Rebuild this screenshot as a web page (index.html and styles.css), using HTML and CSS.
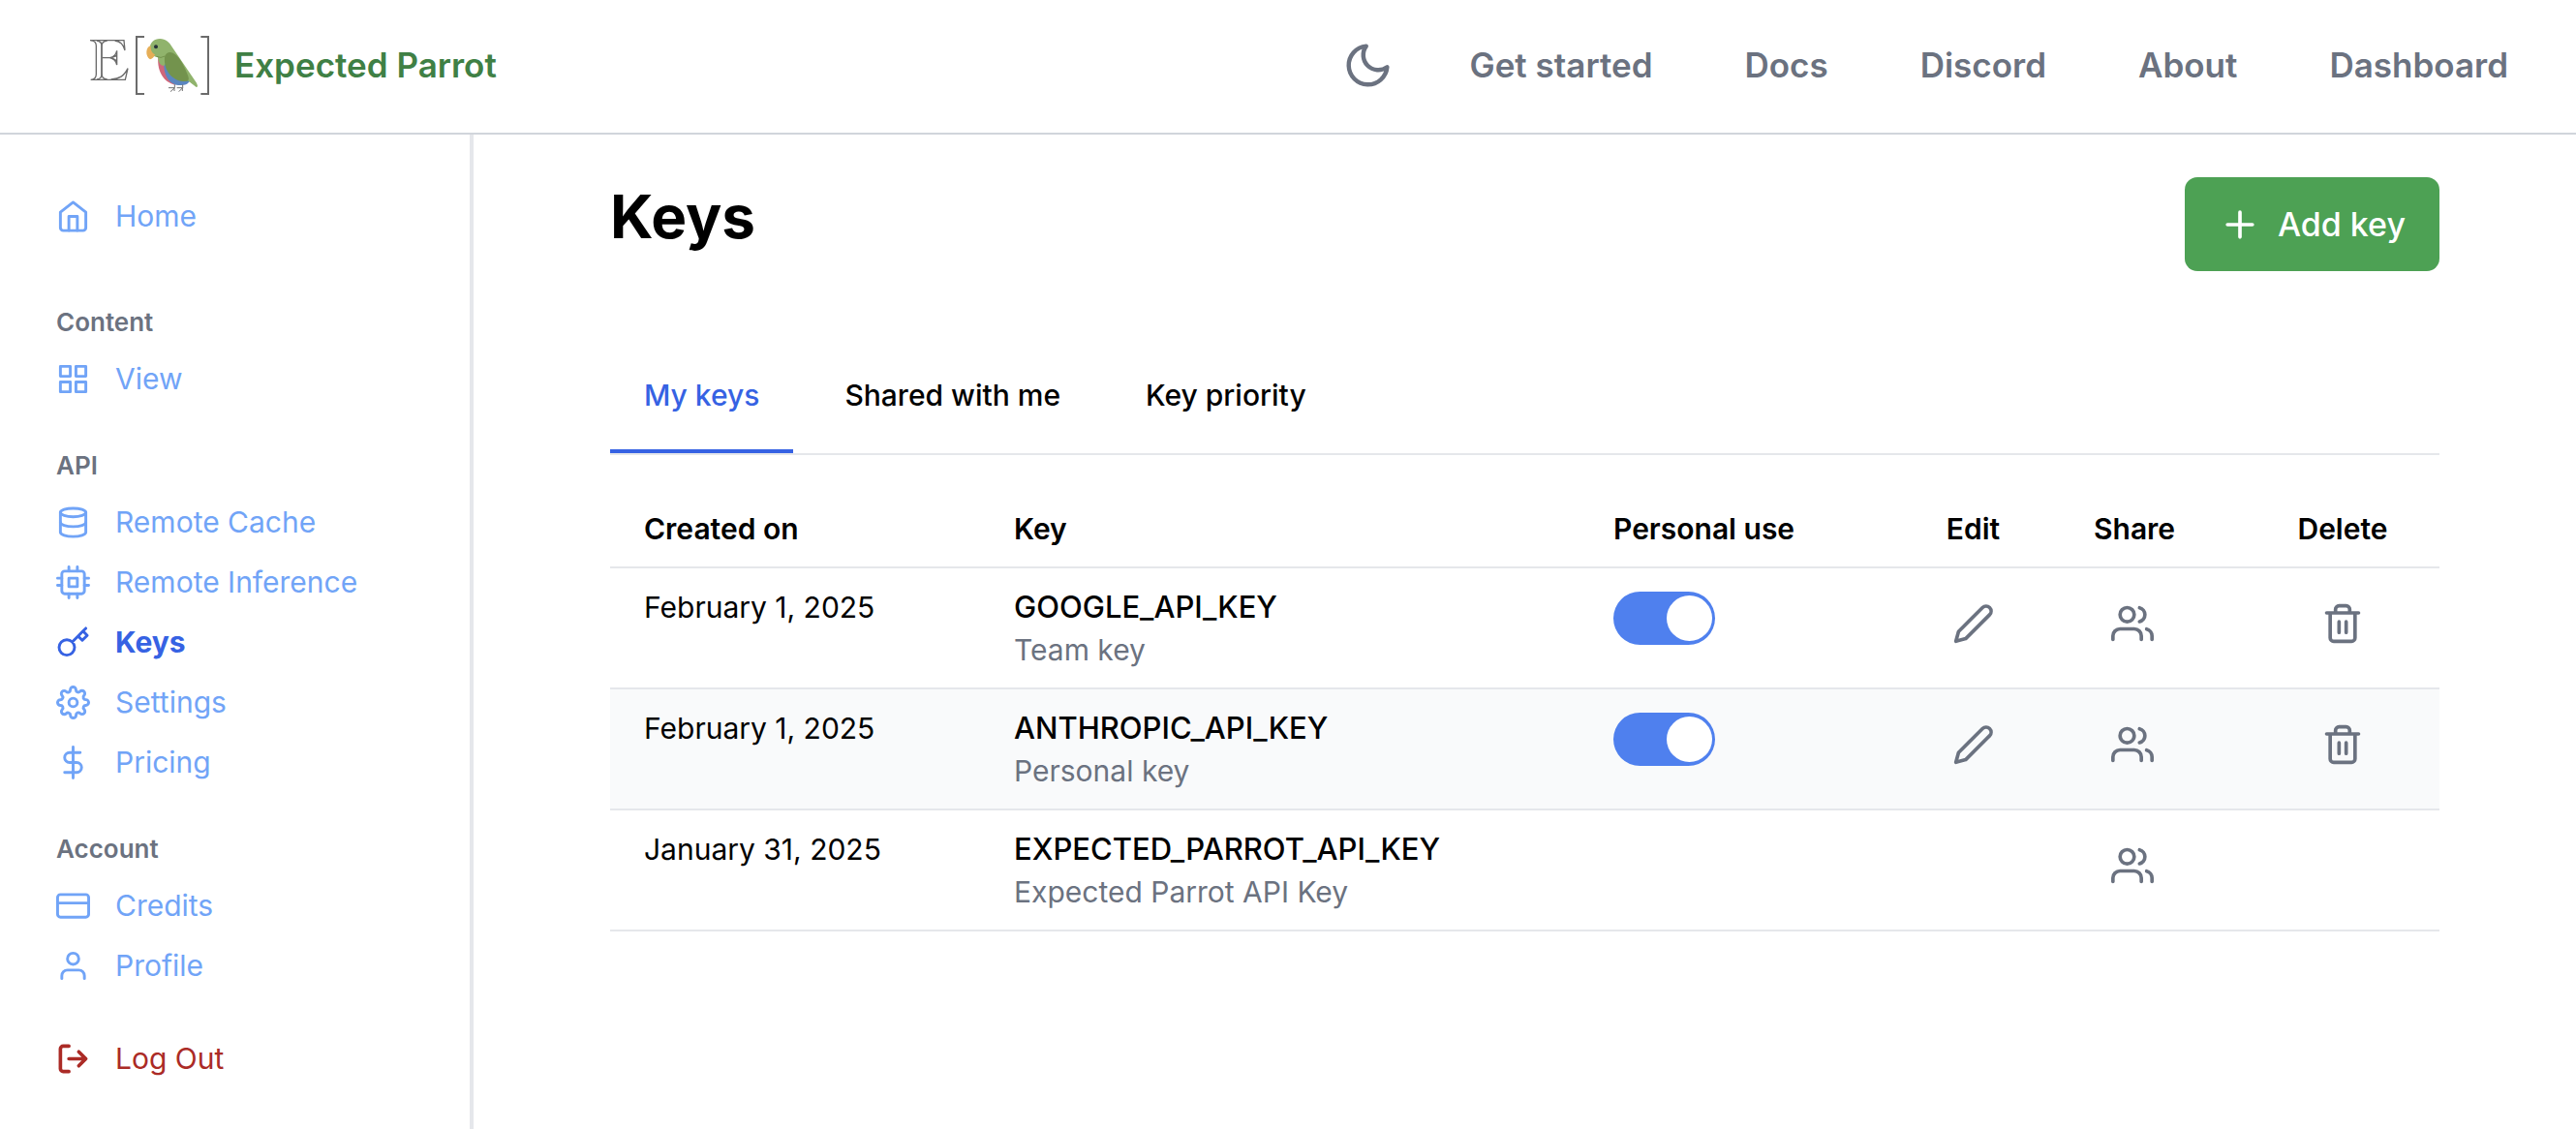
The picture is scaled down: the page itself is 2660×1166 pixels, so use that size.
FILE: index.html
```html
<!DOCTYPE html>
<html lang="en">
<head>
<meta charset="utf-8">
<meta name="viewport" content="width=device-width, initial-scale=1">
<title>Keys - Expected Parrot</title>
<link rel="stylesheet" href="styles.css">
</head>
<body>
<svg class="sprite" aria-hidden="true">
  <symbol id="i-home" viewBox="0 0 24 24"><path d="M3 9l9-7 9 7v11a2 2 0 0 1-2 2H5a2 2 0 0 1-2-2z"/><path d="M9 22V12h6v10"/></symbol>
  <symbol id="i-grid" viewBox="0 0 24 24"><rect x="3" y="3" width="7" height="7"/><rect x="14" y="3" width="7" height="7"/><rect x="14" y="14" width="7" height="7"/><rect x="3" y="14" width="7" height="7"/></symbol>
  <symbol id="i-database" viewBox="0 0 24 24"><ellipse cx="12" cy="5" rx="9" ry="3"/><path d="M21 12c0 1.66-4 3-9 3s-9-1.34-9-3"/><path d="M3 5v14c0 1.66 4 3 9 3s9-1.34 9-3V5"/></symbol>
  <symbol id="i-cpu" viewBox="0 0 24 24"><rect x="4" y="4" width="16" height="16" rx="2"/><rect x="9" y="9" width="6" height="6"/><path d="M9 1v3M15 1v3M9 20v3M15 20v3M20 9h3M20 14h3M1 9h3M1 14h3"/></symbol>
  <symbol id="i-key" viewBox="0 0 24 24"><path d="M21 2l-2 2m-7.610 7.610a5.500 5.500 0 1 1-7.778 7.778 5.500 5.500 0 0 1 7.777-7.777zm0 0L15.500 7.500m0 0l3 3L22 7l-3-3m-3.500 3.500L19 4"/></symbol>
  <symbol id="i-settings" viewBox="0 0 24 24"><circle cx="12" cy="12" r="3"/><path d="M19.4 15a1.65 1.65 0 0 0 .33 1.820l.06.06a2 2 0 0 1 0 2.830 2 2 0 0 1-2.830 0l-.06-.06a1.650 1.650 0 0 0-1.820-.33 1.650 1.650 0 0 0-1 1.510V21a2 2 0 0 1-2 2 2 2 0 0 1-2-2v-.09A1.650 1.650 0 0 0 9 19.400a1.650 1.650 0 0 0-1.820.33l-.06.06a2 2 0 0 1-2.830 0 2 2 0 0 1 0-2.830l.06-.06a1.650 1.650 0 0 0 .33-1.820 1.650 1.650 0 0 0-1.510-1H3a2 2 0 0 1-2-2 2 2 0 0 1 2-2h.09A1.650 1.650 0 0 0 4.600 9a1.650 1.650 0 0 0-.33-1.820l-.06-.06a2 2 0 0 1 0-2.830 2 2 0 0 1 2.830 0l.06.06a1.650 1.650 0 0 0 1.820.33H9a1.650 1.650 0 0 0 1-1.510V3a2 2 0 0 1 2-2 2 2 0 0 1 2 2v.09a1.650 1.650 0 0 0 1 1.510 1.650 1.650 0 0 0 1.820-.33l.06-.06a2 2 0 0 1 2.830 0 2 2 0 0 1 0 2.830l-.06.06a1.650 1.650 0 0 0-.33 1.820V9a1.650 1.650 0 0 0 1.510 1H21a2 2 0 0 1 2 2 2 2 0 0 1-2 2h-.09a1.650 1.650 0 0 0-1.510 1z"/></symbol>
  <symbol id="i-dollar" viewBox="0 0 24 24"><path d="M12 1v22M17 5H9.500a3.500 3.500 0 0 0 0 7h5a3.500 3.500 0 0 1 0 7H6"/></symbol>
  <symbol id="i-card" viewBox="0 0 24 24"><rect x="1" y="4" width="22" height="16" rx="2"/><path d="M1 10h22"/></symbol>
  <symbol id="i-user" viewBox="0 0 24 24"><path d="M20 21v-2a4 4 0 0 0-4-4H8a4 4 0 0 0-4 4v2"/><circle cx="12" cy="7" r="4"/></symbol>
  <symbol id="i-logout" viewBox="0 0 24 24"><path d="M9 21H5a2 2 0 0 1-2-2V5a2 2 0 0 1 2-2h4M16 17l5-5-5-5M21 12H9"/></symbol>
  <symbol id="i-moon" viewBox="0 0 24 24"><path d="M21 12.790A9 9 0 1 1 11.210 3 7 7 0 0 0 21 12.790z"/></symbol>
  <symbol id="i-plus" viewBox="0 0 24 24"><path d="M12 5v14M5 12h14"/></symbol>
  <symbol id="i-pencil" viewBox="0 0 24 24"><path d="M17 3a2.828 2.828 0 1 1 4 4L7.500 20.500 2 22l1.500-5.500L17 3z"/></symbol>
  <symbol id="i-users" viewBox="0 0 24 24"><path d="M17 21v-2a4 4 0 0 0-4-4H5a4 4 0 0 0-4 4v2"/><circle cx="9" cy="7" r="4"/><path d="M23 21v-2a4 4 0 0 0-3-3.870M16 3.130a4 4 0 0 1 0 7.750"/></symbol>
  <symbol id="i-trash" viewBox="0 0 24 24"><path d="M3 6h18M19 6v14a2 2 0 0 1-2 2H7a2 2 0 0 1-2-2V6m3 0V4a2 2 0 0 1 2-2h4a2 2 0 0 1 2 2v2M10 11v6M14 11v6"/></symbol>
</svg>

<header class="topbar">
  <a class="brand" href="#">
    <svg class="brand-mark" viewBox="96 111 372 186" aria-hidden="true">
      <g fill="none" stroke="#6b6b6b" stroke-width="4">
        <path d="M99 125H204L207 156C203 138 192 128 176 126"/>
        <path d="M101 125Q118 127 118 142V230Q118 245 101 247H208L216 212C204 236 190 244 164 246"/>
        <path d="M120 126Q135 128 135 142V230Q135 244 120 246"/>
        <path d="M152 126Q136 127 135 142V230Q136 245 152 246"/>
        <path d="M137 179H160Q178 176 182 157V201Q178 183 160 179M168 178L181 172M168 180L181 188"/>
      </g>
      <path d="M267 114H243V291H267M442 114H465V291H442" fill="none" stroke="#6b6b6b" stroke-width="6"/>
      <path d="M310 178C306 222 328 256 362 263L378 250L330 180Z" fill="#d0667a"/>
      <path d="M328 194C326 236 346 258 366 263C384 266 404 264 408 248L350 190Z" fill="#5b86c0"/>
      <path d="M284 150C284 132 298 120 315 120C334 120 345 132 352 144L428 256Q436 270 428 270L402 250L340 186L328 204Q312 204 309 178C298 176 284 168 284 150Z" fill="#90b36c"/>
      <path d="M330 176C334 160 350 158 362 168C378 180 392 206 403 236Q408 251 396 252C362 254 326 226 330 176Z" fill="#73934d"/>
      <path d="M287 142C270 146 270 176 285 184C290 183 298 178 300 169C292 166 286 156 287 142Z" fill="#e6ae57"/>
      <path d="M305 175Q318 182 331 174" fill="none" stroke="#73934d" stroke-width="3"/>
      <circle cx="303" cy="145" r="6" fill="#263238"/>
      <path d="M361 262V272L348 284M342 272H360M360 272V282M386 262V272L374 284M368 272H385M385 272V282" fill="none" stroke="#707070" stroke-width="3"/>
    </svg>
    <span>Expected Parrot</span>
  </a>
  <nav class="topnav" aria-label="Main">
    <button class="theme" type="button" aria-label="Dark mode"><svg class="icon"><use href="#i-moon"/></svg></button>
    <a href="#">Get started</a>
    <a href="#">Docs</a>
    <a href="#">Discord</a>
    <a href="#">About</a>
    <a href="#">Dashboard</a>
  </nav>
</header>

<div class="shell">
  <nav class="sidebar" aria-label="Account">
    <a class="side-link" href="#"><svg class="icon"><use href="#i-home"/></svg>Home</a>
    <section class="side-group first">
      <h2>Content</h2>
      <a class="side-link" href="#"><svg class="icon"><use href="#i-grid"/></svg>View</a>
    </section>
    <section class="side-group">
      <h2>API</h2>
      <a class="side-link" href="#"><svg class="icon"><use href="#i-database"/></svg>Remote Cache</a>
      <a class="side-link" href="#"><svg class="icon"><use href="#i-cpu"/></svg>Remote Inference</a>
      <a class="side-link current" href="#" aria-current="page"><svg class="icon"><use href="#i-key"/></svg>Keys</a>
      <a class="side-link" href="#"><svg class="icon"><use href="#i-settings"/></svg>Settings</a>
      <a class="side-link" href="#"><svg class="icon"><use href="#i-dollar"/></svg>Pricing</a>
    </section>
    <section class="side-group">
      <h2>Account</h2>
      <a class="side-link" href="#"><svg class="icon"><use href="#i-card"/></svg>Credits</a>
      <a class="side-link" href="#"><svg class="icon"><use href="#i-user"/></svg>Profile</a>
    </section>
    <a class="side-link logout" href="#"><svg class="icon"><use href="#i-logout"/></svg>Log Out</a>
  </nav>

  <main class="content">
    <div class="page-head">
      <h1>Keys</h1>
      <button class="add-button" type="button"><svg class="icon"><use href="#i-plus"/></svg>Add key</button>
    </div>
    <div class="tabs" role="tablist">
      <button type="button" role="tab" aria-selected="true">My keys</button>
      <button type="button" role="tab" aria-selected="false">Shared with me</button>
      <button type="button" role="tab" aria-selected="false">Key priority</button>
    </div>
    <table class="keys">
      <colgroup><col class="c-date"><col class="c-key"><col class="c-use"><col class="c-edit"><col class="c-share"><col class="c-delete"></colgroup>
      <thead>
        <tr><th scope="col">Created on</th><th scope="col">Key</th><th scope="col">Personal use</th><th scope="col" class="mid">Edit</th><th scope="col">Share</th><th scope="col" class="mid">Delete</th></tr>
      </thead>
      <tbody>
        <tr>
          <td>February 1, 2025</td>
          <td><div class="key-name">GOOGLE_API_KEY</div><div class="key-kind">Team key</div></td>
          <td><input class="switch" type="checkbox" role="switch" aria-label="Personal use of GOOGLE_API_KEY" checked></td>
          <td class="mid"><button class="icon-button" type="button" aria-label="Edit"><svg class="icon"><use href="#i-pencil"/></svg></button></td>
          <td><button class="icon-button" type="button" aria-label="Share"><svg class="icon"><use href="#i-users"/></svg></button></td>
          <td class="mid"><button class="icon-button" type="button" aria-label="Delete"><svg class="icon"><use href="#i-trash"/></svg></button></td>
        </tr>
        <tr>
          <td>February 1, 2025</td>
          <td><div class="key-name">ANTHROPIC_API_KEY</div><div class="key-kind">Personal key</div></td>
          <td><input class="switch" type="checkbox" role="switch" aria-label="Personal use of ANTHROPIC_API_KEY" checked></td>
          <td class="mid"><button class="icon-button" type="button" aria-label="Edit"><svg class="icon"><use href="#i-pencil"/></svg></button></td>
          <td><button class="icon-button" type="button" aria-label="Share"><svg class="icon"><use href="#i-users"/></svg></button></td>
          <td class="mid"><button class="icon-button" type="button" aria-label="Delete"><svg class="icon"><use href="#i-trash"/></svg></button></td>
        </tr>
        <tr>
          <td>January 31, 2025</td>
          <td><div class="key-name">EXPECTED_PARROT_API_KEY</div><div class="key-kind">Expected Parrot API Key</div></td>
          <td></td>
          <td></td>
          <td><button class="icon-button" type="button" aria-label="Share"><svg class="icon"><use href="#i-users"/></svg></button></td>
          <td></td>
        </tr>
      </tbody>
    </table>
  </main>
</div>
</body>
</html>
```
FILE: styles.css
```css
* { box-sizing: border-box; }

body {
  margin: 0;
  min-height: 100vh;
  display: flex;
  flex-direction: column;
  background: #fff;
  color: #000;
  font-family: Inter, "Liberation Sans", sans-serif;
  font-size: 30px;
  line-height: 44px;
}

h1, h2 { margin: 0; }
a { color: inherit; text-decoration: none; }
button { font: inherit; color: inherit; background: none; border: 0; padding: 0; cursor: pointer; }

.sprite { display: none; }

.icon {
  display: block;
  flex: none;
  width: 35px;
  height: 35px;
  fill: none;
  stroke: currentColor;
  stroke-width: 2;
  stroke-linecap: round;
  stroke-linejoin: round;
}

/* Top bar */
.topbar {
  display: flex;
  align-items: center;
  justify-content: space-between;
  padding: 35px 70px 37px 92px;
  border-bottom: 2px solid #d1d5db;
  font-size: 35px;
  font-weight: 600;
  line-height: 65px;
}
.brand { display: flex; align-items: center; gap: 26px; color: #3f8045; }
.brand-mark { width: 124px; height: 62px; }
.topnav { display: flex; align-items: center; gap: 95px; color: #6b7280; }
.theme { margin-right: -17px; }
.theme .icon { width: 53px; height: 53px; }

/* Sidebar */
.shell { flex: 1; display: flex; }
.sidebar {
  flex: none;
  width: 489px;
  padding: 53px 24px 24px 58px;
  border-right: 4px solid #e5e7eb;
}
.side-link {
  display: flex;
  align-items: center;
  gap: 26px;
  height: 62px;
  color: #71a4f7;
}
.side-group { margin-top: 41px; }
.side-group.first { margin-top: 61px; }
.side-group h2 {
  margin-bottom: 9px;
  color: #6b7280;
  font-size: 26px;
  font-weight: 600;
  line-height: 36px;
}
.current { color: #3662e3; font-weight: 700; }
.logout { margin-top: 34px; color: #ab2b26; }
.logout .icon { stroke-width: 2.5; }

/* Main column */
.content { flex: 1; min-width: 0; padding: 44px 141px 44px 141px; }
.page-head { display: flex; justify-content: space-between; align-items: flex-start; }
h1 { font-size: 62px; font-weight: 700; line-height: 82px; }
.add-button {
  display: flex;
  align-items: center;
  gap: 17px;
  height: 97px;
  padding: 0 35px;
  border-radius: 13px;
  background: #4da154;
  color: #fff;
  font-size: 34px;
  font-weight: 500;
}
.add-button .icon { width: 44px; height: 44px; }

.tabs {
  display: flex;
  gap: 18px;
  margin-top: 66px;
  border-bottom: 2px solid #e5e7eb;
  font-weight: 500;
}
.tabs button { height: 122px; padding: 6px 35px 0; border-bottom: 4px solid transparent; }
.tabs [aria-selected="true"] { border-color: #3662e3; color: #3662e3; }

/* Keys table */
.keys { width: 100%; margin-top: 36px; border-collapse: separate; border-spacing: 0; table-layout: fixed; }
.c-date { width: 382px; }
.c-key { width: 619px; }
.c-use { width: 317px; }
.c-edit { width: 179px; }
.c-share { width: 192px; }
th, td { padding: 18px 0 17px 35px; text-align: left; vertical-align: top; border-bottom: 2px solid #e5e7eb; }
th { font-weight: 600; }
td { height: 125px; }
tbody tr:nth-child(even) { background: #f9fafb; }
td { padding-bottom: 16px; }
.keys .mid { padding-left: 0; text-align: center; }
.key-name { font-size: 31px; font-weight: 500; }
.key-kind { color: #6b7280; }

.icon-button { display: inline-block; padding: 17px 18px; color: #6b7280; vertical-align: top; }
.icon-button .icon { width: 44px; height: 44px; }

.switch {
  appearance: none;
  display: block;
  position: relative;
  width: 105px;
  height: 55px;
  margin: 6px 0 0;
  border-radius: 28px;
  background: #9ca3af;
}
.switch::before {
  content: "";
  position: absolute;
  top: 4px;
  left: 4px;
  width: 47px;
  height: 47px;
  border-radius: 50%;
  background: #fff;
}
.switch:checked { background: #4f80ee; }
.switch:checked::before { left: 55px; }
```
